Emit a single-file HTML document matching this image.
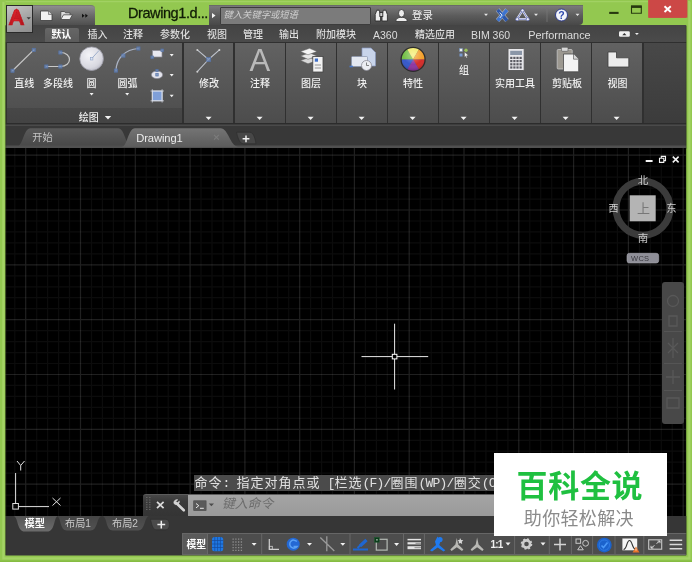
<!DOCTYPE html>
<html><head><meta charset="utf-8">
<style>
*{margin:0;padding:0;box-sizing:border-box}
html,body{width:692px;height:562px;overflow:hidden}
body{background:#93c850;font-family:"Liberation Sans","Noto Sans CJK SC",sans-serif;position:relative;color:#e6e6e6;font-size:11px}
.a{position:absolute}
#win{left:5px;top:0px;width:682px;height:556px;background:#93c850;overflow:hidden}
#o{will-change:transform;left:-5px;top:0px;width:692px;height:562px}
.t{position:absolute;white-space:nowrap;line-height:1}
.pan{position:absolute;top:42.500px;height:81px;background:linear-gradient(#626262,#4c4c4c)}
.arr{position:absolute;width:0;height:0;border-left:3px solid transparent;border-right:3px solid transparent;border-top:3px solid #f0f0f0}
.sarr{position:absolute;width:0;height:0;border-left:2px solid transparent;border-right:2px solid transparent;border-top:2px solid #e8e8e8}
.tb{font-size:10px;color:#dcdcdc;font-weight:500}
.lbl{position:absolute;top:79px;font-size:10px;font-weight:500;text-align:center;color:#f0f0f0;white-space:nowrap;line-height:1}
</style></head><body>
<div class="a" id="win"><div class="a" id="o">

<!-- title bar -->
<div class="a" style="left:5px;top:4px;width:682px;height:22px;background:#93c850"></div>
<div class="a" style="left:6px;top:5px;width:88.500px;height:21px;background:linear-gradient(#8e8e8e,#6c6c6c 45%,#4c4c4c);border-radius:0 4px 0 0;border-top:1px solid #777"></div>
<div class="t" style="left:128px;top:5.500px;font-size:14.500px;letter-spacing:-0.42px;color:#101c06;-webkit-text-stroke:0.3px #101c06">Drawing1.d...</div>
<div class="a" style="left:208.500px;top:5px;width:374px;height:20px;background:linear-gradient(#7a7a7a,#5c5c5c 50%,#484848);border-radius:0 0 4px 0;border-top:1px solid #6a6a6a"></div>
<div class="a" style="left:219.500px;top:6.500px;width:151px;height:18px;background:#7b7b7b;border:1px solid #3c3c3c;border-radius:1px"></div>
<div class="t" style="left:223.500px;top:10.500px;font-size:9.300px;color:#cfcfcf;font-style:italic">键入关键字或短语</div>
<div class="t" style="left:412px;top:10.800px;font-size:10.400px;color:#f2f2f2">登录</div>
<svg class="a" style="left:5px;top:0" width="687" height="48" viewBox="5 0 687 48">
 <!-- info center arrow -->
 <path d="M212 13L215.500 15.600L212 18.200Z" fill="#f4f4f4"/>
 <!-- QAT new -->
 <path d="M40.500 11H48.500L52 14.500V20.500H40.500Z" fill="#f2f2f2" stroke="#3a3a3a" stroke-width="0.800"/>
 <path d="M48.500 11V14.500H52" fill="#cfcfcf" stroke="#555" stroke-width="0.600"/>
 <!-- QAT open -->
 <path d="M60.800 19.500V11.500H64.500L65.500 12.800H70V15" fill="#dcdcdc" stroke="#444" stroke-width="0.800"/>
 <path d="M60.800 19.500L63.500 14.800H72.500L69.800 19.500Z" fill="#f0f0f0" stroke="#444" stroke-width="0.800"/>
 <!-- QAT more -->
 <path d="M82 13.800L84.600 15.800L82 17.800ZM85.300 13.800L87.900 15.800L85.300 17.800Z" fill="#111"/>
 <!-- binoculars -->
 <g fill="#ececec" stroke="#2e2e2e" stroke-width="0.900">
  <path d="M375.200 21V14.500L376.800 10.200H379.200L380.600 14.500V21Z"/>
  <path d="M382 21V14.500L383.400 10.200H385.800L387.400 14.500V21Z"/>
  <rect x="379.800" y="12.500" width="3" height="4" fill="#d0d0d0"/>
 </g>
 <!-- user -->
 <g fill="#ededed" stroke="#303030" stroke-width="0.800">
  <path d="M395.800 21.500C395.800 18.500 398.500 17.800 400 17.300H403C404.500 17.800 407.300 18.500 407.300 21.500Z"/>
  <ellipse cx="401.500" cy="13.300" rx="3" ry="3.800"/>
 </g>
 <!-- small arrows -->
 <path d="M484 13.800H488L486 16ZM534 13.800H538L536 16ZM575.500 13.800H579.500L577.500 16Z" fill="#e6e6e6"/>
 <!-- exchange X -->
 <g stroke-linecap="butt" fill="none">
  <path d="M497.600 9.800L507 20.600" stroke="#dfe6f4" stroke-width="4.600" stroke-opacity="0.55"/>
  <path d="M507 9.800L497.600 20.600" stroke="#dfe6f4" stroke-width="4.600" stroke-opacity="0.55"/>
  <path d="M497.600 9.800L507 20.600" stroke="#2d57a8" stroke-width="3.400"/>
  <path d="M507 9.800L497.600 20.600" stroke="#3e74cf" stroke-width="3.400"/>
  <path d="M499.800 12.500L502 15.200L499.800 18" stroke="#e8eef8" stroke-width="1"/>
 </g>
 <!-- A360 triangle -->
 <path d="M522.500 10.500L528 19.200H517Z" fill="none" stroke="#e8e8f4" stroke-width="2.200" stroke-linejoin="round"/>
 <path d="M522.500 10.500L528 19.200H517Z" fill="none" stroke="#4a5eb0" stroke-width="0.700" stroke-linejoin="round"/>
 <circle cx="522.500" cy="10.500" r="1.600" fill="#f0f0fa" stroke="#3a4a9a" stroke-width="0.600"/>
 <circle cx="517.200" cy="19.200" r="1.600" fill="#f0f0fa" stroke="#3a4a9a" stroke-width="0.600"/>
 <circle cx="527.800" cy="19.200" r="1.600" fill="#f0f0fa" stroke="#3a4a9a" stroke-width="0.600"/>
 <path d="M547 9V22" stroke="#777" stroke-width="0.800"/>
 <!-- help -->
 <circle cx="561.500" cy="15" r="6" fill="#f2f4fa" stroke="#26348a" stroke-width="0.900"/>
 <text x="561.500" y="19" font-size="10.500" font-weight="bold" fill="#2c48b0" text-anchor="middle" font-family="Liberation Sans, sans-serif">?</text>
 <!-- window controls -->
 <path d="M609.200 12.900H618.600" stroke="#27380f" stroke-width="2.100"/>
 <path d="M631.500 6.800H641.300V13.200H631.500Z" fill="none" stroke="#27380f" stroke-width="1.100"/>
 <path d="M631 6.600H641.800" stroke="#27380f" stroke-width="2.600"/>
 <rect x="648.400" y="0" width="39" height="17.800" fill="#cc4a48"/>
 <path d="M664.500 6.200L670.800 12M670.800 6.200L664.500 12" stroke="#fff" stroke-width="1.900"/>
</svg>

<!-- ribbon tabs -->
<div class="a" style="left:5px;top:25px;width:682px;height:18px;background:linear-gradient(#444,#4b4b4b)"></div>
<div class="a" style="left:44.500px;top:28px;width:34px;height:15px;background:linear-gradient(#666,#5a5a5a);border-radius:2px 2px 0 0"></div>
<!-- app button -->
<div class="a" style="left:5.500px;top:5px;width:27.500px;height:27.500px;background:linear-gradient(160deg,#c4c4c4,#a2a2a2 55%,#8e8e8e);border:1px solid #2a2a2a"></div>
<svg class="a" style="left:5px;top:4px" width="30" height="30" viewBox="5 4 30 30">
 <defs><linearGradient id="ag" x1="0" y1="0" x2="1" y2="0"><stop offset="0" stop-color="#b01018"/><stop offset="0.45" stop-color="#dc242c"/><stop offset="1" stop-color="#a80e16"/></linearGradient></defs>
 <path d="M16.500 12.500L19.800 20.500H13.200ZM14.300 10.600L16.500 8.500L18.700 10.600Z" fill="#cc1c24"/>
 <text x="16.450" y="25.100" font-size="22.800" font-weight="bold" text-anchor="middle" font-family="Liberation Sans, sans-serif" fill="url(#ag)" stroke="#c01820" stroke-width="0.700" stroke-linejoin="round">A</text>
 <path d="M26.600 17.300H30.800L28.700 19.500Z" fill="#3c3c3c"/>
</svg>
<div class="t tb" style="left:51.200px;top:30px;color:#fff;font-weight:bold">默认</div>
<div class="t tb" style="left:87.500px;top:30px">插入</div>
<div class="t tb" style="left:123px;top:30px">注释</div>
<div class="t tb" style="left:160px;top:30px">参数化</div>
<div class="t tb" style="left:207px;top:30px">视图</div>
<div class="t tb" style="left:243px;top:30px">管理</div>
<div class="t tb" style="left:279px;top:30px">输出</div>
<div class="t tb" style="left:316px;top:30px">附加模块</div>
<div class="t tb" style="left:373px;top:30px;font-size:10.500px">A360</div>
<div class="t tb" style="left:415px;top:30px">精选应用</div>
<div class="t tb" style="left:471px;top:30px;font-size:10.500px">BIM 360</div>
<div class="t tb" style="left:528.300px;top:29.600px;font-size:10.900px">Performance</div>
<svg class="a" style="left:615px;top:28px" width="30" height="12" viewBox="615 28 30 12">
 <rect x="619" y="31.200" width="10.800" height="5.600" rx="1.300" fill="#f0f0f0"/>
 <path d="M622.300 35.300H626.500L624.400 33Z" fill="#333"/>
 <path d="M635 33H638.800L636.900 35Z" fill="#eee"/>
</svg>

<!-- ribbon panels -->
<div class="a" style="left:5px;top:42px;width:682px;height:82.500px;background:linear-gradient(#484848,#3b3b3b);border-top:1px solid #2f2f2f"></div>
<div class="a" style="left:5px;top:42px;width:2px;height:82px;background:#333"></div>
<div class="a" style="left:7px;top:42px;width:636.500px;height:82px;background:#303030"></div>
<div class="pan" style="left:7.200px;width:175.300px"></div>
<div class="a" style="left:7.200px;top:108.200px;width:175.300px;height:15.800px;background:linear-gradient(#474747,#434343)"></div>
<div class="pan" style="left:184.30px;width:49.2px"></div>
<div class="pan" style="left:235.32px;width:49.2px"></div>
<div class="pan" style="left:286.34px;width:49.2px"></div>
<div class="pan" style="left:337.36px;width:49.2px"></div>
<div class="pan" style="left:388.38px;width:49.2px"></div>
<div class="pan" style="left:439.40px;width:49.2px"></div>
<div class="pan" style="left:490.42px;width:49.2px"></div>
<div class="pan" style="left:541.44px;width:49.2px"></div>
<div class="pan" style="left:592.46px;width:49.2px"></div>
<div class="a" style="left:5px;top:123.200px;width:682px;height:1.600px;background:#2c2c2c"></div>
<div class="lbl" style="left:14.2px">直线</div>
<div class="lbl" style="left:43px">多段线</div>
<div class="lbl" style="left:86.6px">圆</div>
<div class="lbl" style="left:117.5px">圆弧</div>
<div class="lbl" style="left:199px">修改</div>
<div class="lbl" style="left:250px">注释</div>
<div class="lbl" style="left:301px">图层</div>
<div class="lbl" style="left:357px">块</div>
<div class="lbl" style="left:403px">特性</div>
<div class="lbl" style="left:495px">实用工具</div>
<div class="lbl" style="left:552px">剪贴板</div>
<div class="lbl" style="left:607.5px">视图</div>
<div class="lbl" style="left:459px;top:66px">组</div>
<div class="lbl" style="left:78.800px;top:112.500px">绘图</div>
<div class="t" style="left:249.600px;top:44.700px;font-size:31px;color:#b9b9b9;font-family:'Liberation Sans',sans-serif">A</div>
<svg class="a" style="left:5px;top:42px" width="682" height="82" viewBox="5 42 682 82">
<path d="M12.5 70.700L33.800 49.900" stroke="#c8c8c8" stroke-width="1.200"/><rect x="10.9" y="69.1" width="3.2" height="3.2" fill="#6f8cbc" fill-opacity="0.75" stroke="#5573a8" stroke-width="0.7"/><rect x="32.2" y="48.3" width="3.2" height="3.2" fill="#6f8cbc" fill-opacity="0.75" stroke="#5573a8" stroke-width="0.7"/>
<path d="M46.300 66.500H60.400C72.500 66.500 72.500 52.500 60.400 52.500" stroke="#c8c8c8" stroke-width="1.200" fill="none"/><rect x="44.7" y="64.9" width="3.2" height="3.2" fill="#6f8cbc" fill-opacity="0.75" stroke="#5573a8" stroke-width="0.7"/><rect x="58.8" y="64.9" width="3.2" height="3.2" fill="#6f8cbc" fill-opacity="0.75" stroke="#5573a8" stroke-width="0.7"/><rect x="58.8" y="50.9" width="3.2" height="3.2" fill="#6f8cbc" fill-opacity="0.75" stroke="#5573a8" stroke-width="0.7"/>
<defs><radialGradient id="cg" cx="0.4" cy="0.35" r="0.75"><stop offset="0" stop-color="#f4f4f8"/><stop offset="0.7" stop-color="#d8d8e0"/><stop offset="1" stop-color="#b4b4c0"/></radialGradient></defs><circle cx="91.600" cy="58.700" r="11.800" fill="url(#cg)" stroke="#9a9aa6" stroke-width="0.800"/><path d="M91.600 58.700L99 50.500" stroke="#9fb0cc" stroke-width="1"/><rect x="90.300" y="57.400" width="2.600" height="2.600" fill="#dfe6f2" stroke="#8fa4c8" stroke-width="0.600"/>
<path d="M115.900 70.600C116.500 58 125 49.500 138.400 48.500" stroke="#aab2c2" stroke-width="1.200" fill="none"/><rect x="114.3" y="69" width="3.2" height="3.2" fill="#6f8cbc" fill-opacity="0.75" stroke="#5573a8" stroke-width="0.7"/><rect x="121.8" y="54" width="3.2" height="3.2" fill="#6f8cbc" fill-opacity="0.75" stroke="#5573a8" stroke-width="0.7"/><rect x="136.8" y="46.9" width="3.2" height="3.2" fill="#6f8cbc" fill-opacity="0.75" stroke="#5573a8" stroke-width="0.7"/>
<rect x="152.500" y="50.500" width="9.500" height="6.500" fill="#e8e8f0" stroke="#8a8a96" stroke-width="0.700"/><rect x="150.9" y="56.0" width="2.6" height="2.6" fill="#6f8cbc" fill-opacity="0.75" stroke="#5573a8" stroke-width="0.7"/><rect x="160.9" y="49.0" width="2.6" height="2.6" fill="#6f8cbc" fill-opacity="0.75" stroke="#5573a8" stroke-width="0.7"/><ellipse cx="157" cy="74.800" rx="5.600" ry="3.800" fill="#e4e4ec" stroke="#8a8a96" stroke-width="0.700"/><rect x="155.8" y="73.6" width="2.4" height="2.4" fill="#6f8cbc" fill-opacity="0.75" stroke="#5573a8" stroke-width="0.7"/><rect x="155.9" y="69.5" width="2.2" height="2.2" fill="#6f8cbc" fill-opacity="0.75" stroke="#5573a8" stroke-width="0.7"/><rect x="152.300" y="91" width="9.800" height="9.800" fill="#7f9fd8" stroke="#dfe4f0" stroke-width="0.900"/><path d="M150.500 91H164M150.500 100.800H164M152.300 89.200V102.600M162.100 89.200V102.600" stroke="#d8dce8" stroke-width="0.700"/>
<path d="M169.7 54.0H173.7L171.7 56.4Z" fill="#f2f2f2"/><path d="M169.7 74.0H173.7L171.7 76.4Z" fill="#f2f2f2"/><path d="M169.7 94.8H173.7L171.7 97.2Z" fill="#f2f2f2"/><path d="M89.6 93.0H93.6L91.6 95.4Z" fill="#f2f2f2"/><path d="M125.2 93.0H129.2L127.2 95.4Z" fill="#f2f2f2"/><path d="M104.8 116.1H111.2L108.0 119.5Z" fill="#f2f2f2"/><path d="M205.6 116.7H211.6L208.6 119.9Z" fill="#f2f2f2"/><path d="M256.6 116.7H262.6L259.6 119.9Z" fill="#f2f2f2"/><path d="M307.6 116.7H313.6L310.6 119.9Z" fill="#f2f2f2"/><path d="M358.6 116.7H364.6L361.6 119.9Z" fill="#f2f2f2"/><path d="M409.6 116.7H415.6L412.6 119.9Z" fill="#f2f2f2"/><path d="M460.6 116.7H466.6L463.6 119.9Z" fill="#f2f2f2"/><path d="M511.6 116.7H517.6L514.6 119.9Z" fill="#f2f2f2"/><path d="M562.6 116.7H568.6L565.6 119.9Z" fill="#f2f2f2"/><path d="M613.6 116.7H619.6L616.6 119.9Z" fill="#f2f2f2"/>
<path d="M197.300 49.900L208.500 59.500L219.400 49.900M208.500 59.500L197.300 71.700" stroke="#bfc4cc" stroke-width="1.100" fill="none"/><rect x="206.7" y="57.5" width="4.0" height="4.0" fill="#6f8cbc" fill-opacity="0.75" stroke="#5573a8" stroke-width="0.7"/><circle cx="197.300" cy="49.900" r="1" fill="#d0d0d0"/><circle cx="219.400" cy="49.900" r="1" fill="#d0d0d0"/><circle cx="197.300" cy="71.700" r="1" fill="#d0d0d0"/>
<g stroke="#5a5a5a" stroke-width="0.500"><path d="M300.500 60.500L309.500 57.300L317 60.500L308 63.800Z" fill="#d8d8d8"/><path d="M300.500 56L309.500 52.800L317 56L308 59.300Z" fill="#e6e6e6"/><path d="M300.500 51.500L309.500 48.300L317 51.500L308 54.800Z" fill="#f4f4f4"/></g><rect x="312.800" y="56.500" width="10.200" height="15.500" fill="#f2f2f2" stroke="#444" stroke-width="0.800"/><rect x="314.800" y="58.500" width="3.200" height="3.200" fill="#3f6fc8"/><path d="M314.800 65H321M314.800 68H321" stroke="#888" stroke-width="0.900"/>
<path d="M362 48H371L375.500 52.500V66H362Z" fill="#c8d4ea" stroke="#8a9ac0" stroke-width="0.700"/><rect x="351.500" y="56.500" width="16" height="10" rx="1" fill="#e4e8f0" stroke="#8894ac" stroke-width="0.700"/><circle cx="366.500" cy="65.500" r="5" fill="#eceef2" stroke="#8a8a96" stroke-width="0.800"/><path d="M366.500 62.500V65.500H369" stroke="#666" stroke-width="0.800" fill="none"/><path d="M349.500 66.500H353" stroke="#4a78c8" stroke-width="1.600"/>
<path d="M413.1 59.4L401.10 59.40A12 12 0 0 1 407.10 49.01Z" fill="#6cbc3c"/><path d="M413.1 59.4L407.10 49.01A12 12 0 0 1 419.10 49.01Z" fill="#f2ea5c"/><path d="M413.1 59.4L419.10 49.01A12 12 0 0 1 425.10 59.40Z" fill="#f29a1e"/><path d="M413.1 59.4L425.10 59.40A12 12 0 0 1 419.10 69.79Z" fill="#d4221e"/><path d="M413.1 59.4L419.10 69.79A12 12 0 0 1 407.10 69.79Z" fill="#8a2c9e"/><path d="M413.1 59.4L407.10 69.79A12 12 0 0 1 401.10 59.40Z" fill="#2c50c8"/><defs><radialGradient id="wg" cx="0.5" cy="0.3" r="0.7"><stop offset="0" stop-color="#fff" stop-opacity="0.4"/><stop offset="0.6" stop-color="#fff" stop-opacity="0.05"/><stop offset="1" stop-color="#000" stop-opacity="0.25"/></radialGradient></defs><circle cx="413.1" cy="59.4" r="12" fill="url(#wg)" stroke="#2c2c2c" stroke-width="1.3"/>
<rect x="459.500" y="48.500" width="3" height="3" fill="#f0f0f0" stroke="#6a8ab8" stroke-width="0.500"/><circle cx="466" cy="50.200" r="1.700" fill="#9ac058"/><rect x="459.500" y="53.500" width="3" height="3" fill="#7a9ad0"/><path d="M464.500 52L468.500 55.500L466.500 55.800L467.300 57.600L466.300 58L465.500 56.200L464.500 57.200Z" fill="#f4f4f4" stroke="#555" stroke-width="0.400"/>
<rect x="508" y="48.500" width="16.200" height="22" rx="1" fill="#e8e8ec" stroke="#555" stroke-width="0.900"/><rect x="510.200" y="50.800" width="11.800" height="4.200" fill="#8a96a8"/><rect x="510.2" y="56.8" width="2.200" height="2.200" fill="#5a5a62"/><rect x="513.3" y="56.8" width="2.200" height="2.200" fill="#5a5a62"/><rect x="516.4" y="56.8" width="2.200" height="2.200" fill="#5a5a62"/><rect x="519.5" y="56.8" width="2.200" height="2.200" fill="#5a5a62"/><rect x="510.2" y="60.0" width="2.200" height="2.200" fill="#5a5a62"/><rect x="513.3" y="60.0" width="2.200" height="2.200" fill="#5a5a62"/><rect x="516.4" y="60.0" width="2.200" height="2.200" fill="#5a5a62"/><rect x="519.5" y="60.0" width="2.200" height="2.200" fill="#5a5a62"/><rect x="510.2" y="63.2" width="2.200" height="2.200" fill="#5a5a62"/><rect x="513.3" y="63.2" width="2.200" height="2.200" fill="#5a5a62"/><rect x="516.4" y="63.2" width="2.200" height="2.200" fill="#5a5a62"/><rect x="519.5" y="63.2" width="2.200" height="2.200" fill="#5a5a62"/><rect x="510.2" y="66.4" width="2.200" height="2.200" fill="#5a5a62"/><rect x="513.3" y="66.4" width="2.200" height="2.200" fill="#5a5a62"/><rect x="516.4" y="66.4" width="2.200" height="2.200" fill="#5a5a62"/><rect x="519.5" y="66.4" width="2.200" height="2.200" fill="#5a5a62"/>
<rect x="557.200" y="49.500" width="15" height="19.500" rx="1" fill="#9c9890" stroke="#c8c8c8" stroke-width="0.800"/><rect x="561.500" y="47.300" width="6.500" height="4" rx="1" fill="#d8d8d8" stroke="#555" stroke-width="0.600"/><path d="M563.500 54H573.500L578.700 59.200V71.800H563.500Z" fill="#f4f4f4" stroke="#4a4a4a" stroke-width="0.800"/><path d="M573.500 54V59.200H578.700" fill="#d8d8d8" stroke="#4a4a4a" stroke-width="0.600"/>
<path d="M608 52H616.500V57.800H628.800V67H608Z" fill="#ececec" stroke="#3c3c3c" stroke-width="0.800"/>
</svg>

<!-- doc tabs bar -->
<div class="a" style="left:5px;top:124.500px;width:682px;height:24px;background:#383838"></div>
<svg class="a" style="left:5px;top:124px" width="682" height="25" viewBox="5 124 682 25">
<defs><linearGradient id="tg1" x1="0" y1="0" x2="0" y2="1"><stop offset="0" stop-color="#5a5a5a"/><stop offset="1" stop-color="#484848"/></linearGradient>
<linearGradient id="tg2" x1="0" y1="0" x2="0" y2="1"><stop offset="0" stop-color="#747474"/><stop offset="1" stop-color="#5c5c5c"/></linearGradient></defs>
<path d="M17 146.500C23 146.500 23.500 128.300 30.500 128.300H118C125 128.300 125.500 146.500 131.500 146.500Z" fill="url(#tg1)"/>
<path d="M5 145.600H687V148.200H5Z" fill="#505050"/>
<path d="M5 125.100H687" stroke="#585858" stroke-width="1"/>
<path d="M121.500 147C127.500 147 128 128.300 135 128.300H220.500C228.500 128.300 230 146 238 147Z" fill="url(#tg2)"/>
<path d="M236.500 132.200H250C254.500 132.200 256 143.800 256 143.800H243.500C239 143.800 237.500 136 236.500 132.200Z" fill="#474747" stroke="#2e2e2e" stroke-width="0.700"/>
<path d="M242.600 138.800H249.400M246 135.400V142.200" stroke="#f0f0f0" stroke-width="1.500"/>
<path d="M214 134.800L218.800 139.600M218.800 134.800L214 139.600" stroke="#7c7c7c" stroke-width="1.100"/>
</svg>
<div class="t" style="left:32.300px;top:133px;font-size:10.200px;color:#c4c4c4">开始</div>
<div class="t" style="left:136.300px;top:132.600px;font-size:11.200px;letter-spacing:-0.12px;color:#ececec">Drawing1</div>

<!-- drawing area -->
<div class="a" id="dw" style="left:5px;top:148px;width:681px;height:368px;background:#000"></div>
<svg class="a" style="left:5px;top:148px" width="681" height="368" viewBox="0 0 681 368"><path d="M9.8 0V368M31.7 0V368M42.6 0V368M53.6 0V368M64.5 0V368M86.5 0V368M97.4 0V368M108.4 0V368M119.3 0V368M141.2 0V368M152.2 0V368M163.2 0V368M174.1 0V368M196.0 0V368M207.0 0V368M218.0 0V368M228.9 0V368M250.8 0V368M261.8 0V368M272.7 0V368M283.7 0V368M305.6 0V368M316.6 0V368M327.5 0V368M338.5 0V368M360.4 0V368M371.4 0V368M382.3 0V368M393.3 0V368M415.2 0V368M426.2 0V368M437.1 0V368M448.1 0V368M470.0 0V368M480.9 0V368M491.9 0V368M502.9 0V368M524.8 0V368M535.7 0V368M546.7 0V368M557.7 0V368M579.6 0V368M590.5 0V368M601.5 0V368M612.4 0V368M634.4 0V368M645.3 0V368M656.3 0V368M667.2 0V368M0 18.2H681M0 29.1H681M0 40.1H681M0 51.1H681M0 73.0H681M0 83.9H681M0 94.9H681M0 105.9H681M0 127.8H681M0 138.8H681M0 149.7H681M0 160.7H681M0 182.6H681M0 193.6H681M0 204.6H681M0 215.5H681M0 237.4H681M0 248.4H681M0 259.4H681M0 270.3H681M0 292.3H681M0 303.2H681M0 314.2H681M0 325.2H681M0 347.1H681M0 358.0H681" stroke="#ffffff" stroke-opacity="0.048" stroke-width="1.2" fill="none"/><path d="M20.7 0V368M75.5 0V368M130.3 0V368M185.1 0V368M239.9 0V368M294.7 0V368M349.4 0V368M404.2 0V368M459.0 0V368M513.8 0V368M568.6 0V368M623.4 0V368M678.2 0V368M0 7.2H681M0 62.0H681M0 116.8H681M0 171.7H681M0 226.5H681M0 281.3H681M0 336.1H681" stroke="#ffffff" stroke-opacity="0.125" stroke-width="1.2" fill="none"/></svg>

<!-- crosshair -->
<svg class="a" style="left:5px;top:148px" width="681" height="368" viewBox="5 148 681 368">
<g stroke="#e8e8e8" stroke-width="1" fill="none">
<path d="M361.5 356.6H392M397 356.6H428.2M394.6 323.7V354.2M394.6 359V389.5"/>
<rect x="392.3" y="354.3" width="4.6" height="4.6" stroke="#fff"/>
</g>
<!-- UCS icon -->
<g stroke="#e0e0e0" stroke-width="1" fill="none">
<rect x="12.8" y="503.5" width="5.6" height="5.6"/>
<path d="M18.4 506.6H49M15.6 503.5V473"/>
<path d="M52.5 498L60.5 505.5M60.5 498L52.5 505.5"/>
<path d="M17 461L20.7 465.5L24.5 461M20.7 465.5V470.5"/>
</g>
<!-- viewcube -->
<circle cx="643" cy="208.2" r="27" stroke="#3b3b3b" stroke-width="7" fill="none"/>
<rect x="629.7" y="195.3" width="26" height="26" fill="#b4b4b4"/>
<rect x="627" y="253.3" width="31.7" height="9.7" rx="2.5" fill="#8f8f98" stroke="#a8a8b0" stroke-width="0.6"/>
<!-- window controls -->
<g stroke="#f4f4f4" fill="none">
<path d="M645.7 161H652.6" stroke-width="2"/>
<path d="M659.5 158.2H663.8V162.4H659.5ZM661.3 158V156.4H665.5V160.6H664" stroke-width="1.1"/>
<path d="M672.8 156.6L678.6 162.4M678.6 156.6L672.8 162.4" stroke-width="1.5"/>
</g>
<!-- navbar -->
<rect x="662" y="282" width="22" height="142" rx="3" fill="#484848"/>
<g stroke="#585858" stroke-width="1.3" fill="none">
<circle cx="673" cy="301" r="5.5"/>
<path d="M669 316h8v10h-8z"/>
<path d="M668 343l10 10M678 343l-10 10M673 338v20"/>
<path d="M666 377h14M673 370v14"/>
<path d="M667 398h12v10h-12z"/>
<path d="M664 331.500H682M664 363.500H682M664 390.500H682" stroke="#555" stroke-width="1"/>
</g>
</svg>
<div class="t" style="left:637.800px;top:174.800px;font-size:10.500px;color:#cacaca">北</div>
<div class="t" style="left:637.800px;top:232.600px;font-size:10.500px;color:#cacaca">南</div>
<div class="t" style="left:608.5px;top:204px;font-size:10px;color:#d0d0d0">西</div>
<div class="t" style="left:666.5px;top:204px;font-size:10px;color:#d0d0d0">东</div>
<div class="t" style="left:637px;top:202px;font-size:13px;color:#777">上</div>
<div class="t" style="left:631px;top:254.5px;font-size:7.5px;color:#3a3a40;letter-spacing:0.3px">WCS</div>

<!-- command history -->
<div class="a" style="left:193.500px;top:475.300px;width:301px;height:15.600px;background:#4b4b4b"></div>
<div class="t" style="left:194.500px;top:476.800px;font-size:13px;letter-spacing:1px;color:#e0e0e0;font-family:'Liberation Mono','Noto Sans CJK SC',monospace">命令<span style="font-family:'Liberation Mono','Noto Sans CJK SC',monospace;letter-spacing:-0.8px">: </span>指定对角点或<span style="font-family:'Liberation Mono','Noto Sans CJK SC',monospace;letter-spacing:-0.8px"> [</span>栏选<span style="font-family:'Liberation Mono','Noto Sans CJK SC',monospace;letter-spacing:-0.8px">(F)/</span>圈围<span style="font-family:'Liberation Mono','Noto Sans CJK SC',monospace;letter-spacing:-0.8px">(WP)/</span>圈交<span style="font-family:'Liberation Mono','Noto Sans CJK SC',monospace;letter-spacing:-0.8px">(C</span></div>
<!-- command line -->
<div class="a" style="left:143px;top:493.800px;width:360px;height:22.200px;background:linear-gradient(#484848,#3a3a3a 30%,#343434);border-radius:3px 0 0 0;border-top:1px solid #5c5c5c"></div>
<div class="a" style="left:187.700px;top:494.500px;width:310px;height:21.500px;background:linear-gradient(#a4a4a4,#9a9a9a)"></div>
<svg class="a" style="left:143px;top:494px" width="80" height="22" viewBox="143 494 80 22">
<path d="M146.800 497V511.500M149.800 497V511.500" stroke="#6e6e6e" stroke-width="1.200" stroke-dasharray="1.100 1.300"/>
<path d="M157 501.800L163.600 508.200M163.600 501.800L157 508.200" stroke="#dcdcdc" stroke-width="1.700"/>
<path d="M176.500 503.200L183.800 510.300" stroke="#d4d4d4" stroke-width="2.600" stroke-linecap="round"/>
<path d="M174 503.500A3 3 0 0 0 179.300 501.200L177.300 503L175.700 501.500L177.600 499.800A3 3 0 0 0 174 503.500Z" fill="#d4d4d4" stroke="#d4d4d4" stroke-width="0.800"/>
<rect x="193.700" y="500.800" width="12.400" height="9.800" fill="#5a5a5a" stroke="#4a4a4a" stroke-width="0.600"/>
<path d="M196 503.500L198.800 505.700L196 507.900M200 508.300H203.800" stroke="#e8e8e8" stroke-width="1" fill="none"/>
<path d="M208.800 503.600H214L211.400 506.200Z" fill="#4c4c4c"/>
</svg>
<div class="t" style="left:222px;top:498.200px;font-size:12.800px;color:#6c6c6c;font-style:italic">键入命令</div>

<!-- layout tabs -->
<div class="a" style="left:5px;top:516px;width:682px;height:40px;background:#363636"></div>
<div class="a" style="left:181.800px;top:533.200px;width:505px;height:21.600px;background:#4d4d4d;border:1px solid #666;border-right:none"></div>
<div class="a" style="left:182.800px;top:534.200px;width:24.500px;height:19.600px;background:#5a5a5a"></div>
<svg class="a" style="left:5px;top:516px" width="682" height="40" viewBox="5 516 682 40">
<defs><linearGradient id="lg1" x1="0" y1="0" x2="0" y2="1"><stop offset="0" stop-color="#555"/><stop offset="1" stop-color="#6c6c6c"/></linearGradient><linearGradient id="lg2" x1="0" y1="0" x2="0" y2="1"><stop offset="0" stop-color="#454545"/><stop offset="1" stop-color="#525252"/></linearGradient></defs>
<path d="M13.500 516C18.500 517 16.500 531.600 25 531.600H47C55.500 531.600 53.500 517 58 516Z" fill="url(#lg1)"/>
<path d="M56.500 516C61.500 517 59.500 530.500 67 530.500H90.500C98 530.500 96.500 517 101.500 516Z" fill="url(#lg2)"/>
<path d="M102.500 516C107.500 517 105.500 530.500 113 530.500H138C145.500 530.500 144 517 149 516Z" fill="url(#lg2)"/>
<path d="M150.500 519.300H166C170.500 519.300 170.500 529.800 166 529.800H156C152.500 529.800 151.500 523 150.500 519.300Z" fill="#4a4a4a" stroke="#2c2c2c" stroke-width="0.600"/>
<path d="M157.400 524.600H165.200M161.300 520.800V528.400" stroke="#ececec" stroke-width="1.500"/>
<g stroke="#686868" stroke-width="1">
<path d="M207.500 534V554M261.700 534V554M350 534V554M403.500 534V554M424.400 534V554M514.600 534V554M549.300 534V554M571.400 534V554M592.600 534V554M615 534V554M643.800 534V554"/>
</g>
<!-- grid blue -->
<rect x="212" y="537" width="11.200" height="14.200" rx="2.500" fill="#1f78e4"/>
<path d="M214.800 537V551.200M217.600 537V551.200M220.400 537V551.200M212 540.500H223.200M212 544H223.200M212 547.500H223.200" stroke="#164a9c" stroke-width="0.700"/>
<!-- snap grid -->
<path d="M232.500 539.200H243.500M232.500 542H243.500M232.500 544.800H243.500M232.500 547.600H243.500M232.500 550.400H243.500" stroke="#8c8c8c" stroke-width="1.300" stroke-dasharray="1.300 1.450"/>
<path d="M251.6 542.9H256.6L254.1 545.7Z" fill="#f2f2f2"/><path d="M307.0 542.9H312.0L309.5 545.7Z" fill="#f2f2f2"/><path d="M340.3 542.9H345.3L342.8 545.7Z" fill="#f2f2f2"/><path d="M394.1 543.1H399.1L396.6 545.9Z" fill="#f2f2f2"/><path d="M505.5 542.6H510.5L508.0 545.4Z" fill="#f2f2f2"/><path d="M540.5 542.6H545.5L543.0 545.4Z" fill="#f2f2f2"/>
<!-- ortho -->
<path d="M269.300 539V549.300H279" stroke="#d0d0d0" stroke-width="1.200" fill="none"/><rect x="269.300" y="546.300" width="3" height="3" fill="none" stroke="#d0d0d0" stroke-width="0.800"/>
<!-- polar -->
<circle cx="293.200" cy="544.200" r="6.500" fill="#2468d4"/>
<path d="M296.800 541.500A4 4 0 1 0 297 546.500H293.500" stroke="#5aa0f4" stroke-width="1.500" fill="none"/>
<!-- iso -->
<path d="M326.800 536.300V551.300M320.300 537.500L334.300 551" stroke="#9a9a9a" stroke-width="1.300" fill="none"/>
<!-- otrack -->
<path d="M353 549.500H368M357.500 548L366 540" stroke="#1f66d0" stroke-width="2" fill="none"/><path d="M360 546L366.500 540" stroke="#1f66d0" stroke-width="3.200"/>
<!-- osnap -->
<rect x="376.300" y="539.300" width="10.800" height="10.800" fill="none" stroke="#b4bab4" stroke-width="1.200"/><rect x="374.600" y="537.600" width="4.600" height="4.600" fill="#0c3a1c" stroke="#1c5a2c" stroke-width="0.600"/><rect x="376.300" y="539.200" width="1.300" height="1.300" fill="#d8f0d8"/>
<!-- lineweight -->
<path d="M407.500 539.600H421" stroke="#e4e4e4" stroke-width="1.500"/><path d="M407.500 543.300H421" stroke="#e4e4e4" stroke-width="2.200"/><path d="M407.500 547.700H421" stroke="#e4e4e4" stroke-width="3"/><path d="M415.500 543.300H421M414.500 547.700H421" stroke="#8a8a8a" stroke-width="1"/>
<!-- annotation blue -->
<g fill="#1f7af0"><path d="M437.500 536.500L440.500 541.500L439.200 545L445.300 550.300L443.500 551.500L437.700 547.500L432 551.500L430 550.300L436 545L435 541.500Z"/><circle cx="440" cy="539.500" r="2.600"/></g>
<g fill="#b8b8b4"><path d="M456.800 538L458.200 544.500L463.400 549.600L462 551L456.800 547.200L451.600 551L450.300 549.600L455.400 544.500Z"/><path d="M460 538L461.200 540L463.300 540.300L461.800 541.800L462.200 544L460.200 543L458.600 543.800L459 541.800L457.600 540.300L459.500 540Z" fill="#d8d8d8"/></g>
<path d="M477.100 537.500L478.600 544.500L483.700 549.600L482.300 551L477.100 547.200L471.900 551L470.600 549.600L475.700 544.500Z" fill="#b8b8b4"/>
<!-- gear -->
<circle cx="526.500" cy="544" r="3.600" fill="none" stroke="#cdcdcd" stroke-width="2.600"/><circle cx="526.500" cy="544" r="4.900" fill="none" stroke="#cdcdcd" stroke-width="1.800" stroke-dasharray="1.900 1.950"/>
<!-- plus -->
<path d="M554 544.500H566M560 538.600V550.400" stroke="#d4d4d4" stroke-width="1.500"/>
<!-- shapes -->
<rect x="576" y="539" width="4.600" height="4.300" fill="none" stroke="#c8c8c8" stroke-width="1"/><circle cx="585.600" cy="543.300" r="2.900" fill="none" stroke="#c8c8c8" stroke-width="1"/><path d="M580.500 545.700L583.300 549.800H577.700Z" fill="none" stroke="#c8c8c8" stroke-width="1"/>
<!-- hw accel -->
<circle cx="604.300" cy="545.100" r="7.400" fill="#1b62cc"/><circle cx="604.300" cy="545.100" r="5.200" fill="none" stroke="#2f7ae4" stroke-width="1"/><path d="M601.500 545.500L603.500 547.500L607.500 542.500" stroke="#4a98f8" stroke-width="1.600" fill="none"/>
<!-- graph -->
<rect x="622.400" y="538.500" width="14.800" height="11.800" fill="#f4f4f4"/><path d="M623.500 549.500C627 549.500 626.500 540.500 629.500 540.500C632.500 540.500 632 549.500 636 549.500" stroke="#333" stroke-width="1.100" fill="none"/><path d="M636 546.600L639.500 552.600H632.500Z" fill="#e8742a"/><path d="M636 548.500V550.600" stroke="#fff" stroke-width="0.800"/>
<!-- clean screen -->
<rect x="648.700" y="539.800" width="13" height="9.400" fill="none" stroke="#c8c8c8" stroke-width="1.100"/><path d="M656.500 543.500L660 541M660 541H657.600M660 541V543.200M654.500 545.500L651 548M651 548H653.400M651 548V545.800" stroke="#e0e0e0" stroke-width="0.900" fill="none"/>
<!-- hamburger -->
<path d="M669.600 540.200H682.200M669.600 544.500H682.200M669.600 548.800H682.200" stroke="#d8d8d8" stroke-width="1.600"/>
</svg>
<div class="t" style="left:24.500px;top:519.200px;font-size:10.200px;color:#fff;font-weight:bold">模型</div>
<div class="t" style="left:65px;top:519.200px;font-size:10.200px;color:#c8c8c8">布局1</div>
<div class="t" style="left:112px;top:519.200px;font-size:10.200px;color:#c8c8c8">布局2</div>
<div class="t" style="left:186.500px;top:539.500px;font-size:9.800px;color:#fff;font-weight:bold">模型</div>
<div class="t" style="left:490.500px;top:540px;font-size:10px;color:#f0f0f0;font-weight:bold;letter-spacing:-0.8px">1:1</div>

<!-- watermark -->
<div class="a" style="left:494px;top:453px;width:173px;height:83px;background:#fff"></div>
<div class="t" style="left:516.500px;top:471.300px;font-size:31px;font-weight:bold;letter-spacing:0.7px;color:#1fc040">百科全说</div>
<div class="t" style="left:523.800px;top:509.600px;font-size:18px;letter-spacing:0.35px;color:#8a8a8a">助你轻松解决</div>

</div></div>
<svg class="a" style="left:0;top:0;pointer-events:none" width="692" height="562" viewBox="0 0 692 562">
<path d="M0 0H5.500V555.400H686.300V0H692V562H0Z" fill="#93c850"/>
<path d="M3.400 1.800V558.400H689.400V1.800" fill="none" stroke="#a6d468" stroke-width="2.300" opacity="0.9"/>
<path d="M5.500 1.600H648M688 1.600H690" stroke="#a6d468" stroke-width="1.400" opacity="0.8"/>
<path d="M0 561.300H692" stroke="#86bc42" stroke-width="1.400"/>
<path d="M5.900 26V555M686.200 26V555" stroke="#2c3a1a" stroke-width="0.800" opacity="0.55"/>
<rect x="648.400" y="0" width="39" height="17.600" fill="#cc4846"/>
<path d="M664.500 6.200L670.800 12M670.800 6.200L664.500 12" stroke="#fff" stroke-width="1.900"/>
</svg>
</body></html>
